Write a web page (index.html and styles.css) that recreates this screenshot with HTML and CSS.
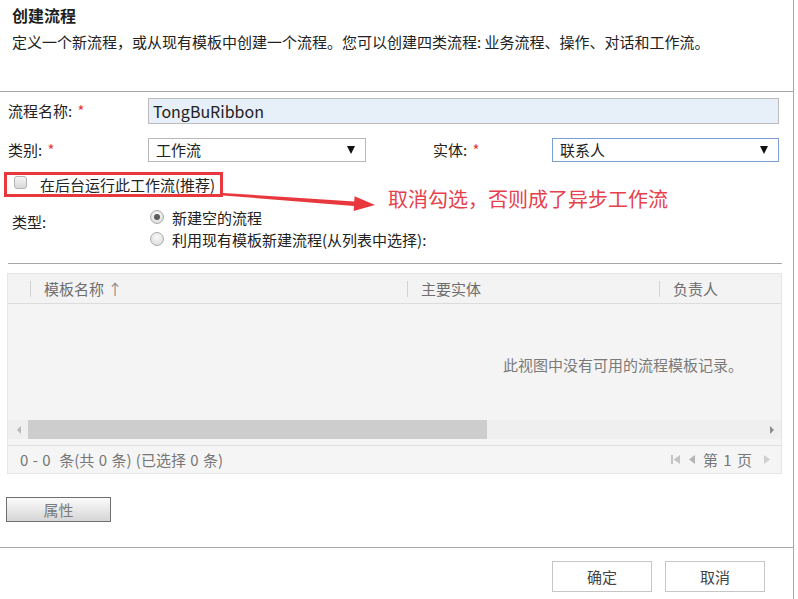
FILE: index.html
```html
<!DOCTYPE html>
<html lang="zh-CN">
<head>
    <meta charset="UTF-8">
    <meta name="viewport" content="width=device-width, initial-scale=1.0">
    <title>创建流程</title>
    <link rel="stylesheet" href="styles.css">
</head>
<body>
    <div class="page">
        <header class="head">
            <h1 class="title">创建流程</h1>
            <p class="desc">定义一个新流程，或从现有模板中创建一个流程。您可以创建四类流程: 业务流程、操作、对话和工作流。</p>
        </header>

        <section class="form">
            <div class="row row-name">
                <label class="label">流程名称: <span class="req">*</span></label>
                <div class="input">TongBuRibbon</div>
            </div>

            <div class="row row-kind">
                <label class="label">类别: <span class="req">*</span></label>
                <div class="select select-kind">工作流<span class="caret"></span></div>
                <label class="label label-entity">实体: <span class="req">*</span></label>
                <div class="select select-entity">联系人<span class="caret"></span></div>
            </div>

            <div class="row row-flag">
                <div class="flag">
                    <span class="checkbox"></span>
                    <span>在后台运行此工作流(推荐)</span>
                </div>
                <svg class="arrow" width="161" height="30" viewBox="0 0 161 30">
                    <polygon points="4,8 135.2,16.4 135.6,11.2 156,20 134.6,26 135,21 4,10.4" fill="#e8383d"/>
                </svg>
                <span class="note">取消勾选，否则成了异步工作流</span>
            </div>

            <div class="row row-type">
                <label class="label label-type">类型:</label>
                <div class="radios">
                    <div class="radio-line"><span class="radio checked"></span>新建空的流程</div>
                    <div class="radio-line"><span class="radio"></span>利用现有模板新建流程(从列表中选择):</div>
                </div>
            </div>
        </section>

        <div class="divider"></div>

        <div class="grid">
            <div class="grid-head">
                <div class="cell cell-check"></div>
                <div class="cell cell-name">模板名称 <span class="sort">↑</span></div>
                <div class="cell cell-entity">主要实体</div>
                <div class="cell cell-owner">负责人</div>
            </div>
            <div class="grid-body">此视图中没有可用的流程模板记录。</div>
            <div class="hscroll">
                <span class="sc-arrow sc-left"></span>
                <div class="sc-track"><div class="sc-thumb"></div></div>
                <span class="sc-arrow sc-right"></span>
            </div>
            <div class="grid-foot">
                <span class="count">0 - 0&nbsp; 条(共 0 条) (已选择 0 条)</span>
                <div class="pager">
                    <svg width="11" height="11" viewBox="0 0 11 11"><rect x="1" y="1" width="2" height="9" fill="#c4c4c4"/><polygon points="10,1 10,10 3.5,5.5" fill="#c4c4c4"/></svg>
                    <svg width="8" height="11" viewBox="0 0 8 11"><polygon points="7,1 7,10 1,5.5" fill="#b4b4b4"/></svg>
                    <span class="page-no">第 1 页</span>
                    <svg width="8" height="11" viewBox="0 0 8 11"><polygon points="1,1 1,10 7,5.5" fill="#cfcfcf"/></svg>
                </div>
            </div>
        </div>

        <div class="props">
            <button class="btn-props">属性</button>
        </div>

        <footer class="actions">
            <button class="btn">确定</button>
            <button class="btn">取消</button>
        </footer>
    </div>
</body>
</html>
```

FILE: styles.css
```css
body {
    margin: 0;
    background: white;
    font-family: "Noto Sans CJK SC", "Noto Sans", sans-serif;
    font-size: 15px;
    color: #222;
}
.page {
    width: 794px;
    height: 599px;
    border-right: 1px solid #a9a9a9;
    box-sizing: border-box;
    display: flex;
    flex-direction: column;
}
.head {
    height: 87px;
    border-bottom: 1px solid #a6a6a6;
    padding: 4px 12px 0;
    box-sizing: content-box;
    flex-shrink: 0;
}
.title {
    margin: 0;
    font-size: 16px;
    line-height: 22px;
    font-weight: 700;
    color: #1f1f1f;
}
.desc {
    margin: 6px 0 0;
    line-height: 20px;
    font-size: 15px;
}
.form {
    padding-left: 8px;
}
.row {
    display: flex;
    align-items: center;
}
.label {
    width: 140px;
    flex-shrink: 0;
    line-height: 20px;
}
.req {
    color: #e8383d;
    margin-left: 2px;
}
.row-name {
    margin-top: 6px;
}
.input {
    width: 631px;
    height: 26px;
    box-sizing: border-box;
    background: #e7eff9;
    border: 1px solid #bcbcbc;
    padding: 0 4px;
    font-size: 16px;
    line-height: 24px;
    color: #222;
}
.row-kind {
    margin-top: 14px;
}
.select {
    height: 24px;
    box-sizing: border-box;
    border: 1px solid #b8b8b8;
    padding: 0 7px;
    line-height: 22px;
    display: flex;
    justify-content: space-between;
    align-items: center;
}
.select-kind {
    width: 218px;
}
.label-entity {
    width: 119px;
    padding-left: 67px;
}
.select-entity {
    width: 227px;
    border-color: #7b9fd6;
}
.caret {
    width: 0;
    height: 0;
    border-left: 4px solid transparent;
    border-right: 4px solid transparent;
    border-top: 8px solid #111;
    margin-right: 3px;
}
.row-flag {
    margin-top: 10px;
    position: relative;
}
.flag {
    margin-left: -4px;
    width: 219px;
    height: 25px;
    box-sizing: border-box;
    border: 3px solid #e8383d;
    display: flex;
    align-items: center;
    gap: 13px;
    padding-left: 7px;
    line-height: 20px;
}
.checkbox {
    width: 13px;
    height: 13px;
    box-sizing: border-box;
    border: 1px solid #b3b3b3;
    border-radius: 3px;
    background: linear-gradient(#f4f4f4, #d9d9d9);
    margin-top: -5px;
}
.arrow {
    position: absolute;
    left: 211px;
    top: 13px;
}
.note {
    position: absolute;
    left: 380px;
    top: 15px;
    font-size: 20px;
    line-height: 24px;
    color: #e6404b;
    white-space: nowrap;
}
.row-type {
    margin-top: 9px;
    align-items: flex-start;
}
.label-type {
    padding-left: 4px;
    width: 136px;
    padding-top: 6px;
}
.radios {
    display: flex;
    flex-direction: column;
}
.radio-line {
    display: flex;
    align-items: center;
    height: 22px;
    gap: 8px;
    margin-left: 2px;
}
.radio {
    width: 14px;
    height: 14px;
    box-sizing: border-box;
    border: 1px solid #ababab;
    border-radius: 50%;
    background: radial-gradient(circle at 50% 35%, #fafafa, #d6d6d6);
    display: flex;
    align-items: center;
    justify-content: center;
}
.radio.checked::after {
    content: "";
    width: 6px;
    height: 6px;
    border-radius: 50%;
    background: #5a5a5a;
}
.divider {
    margin: 13px 11px 0 8px;
    border-top: 1px solid #a9a9a9;
}
.grid {
    margin: 9px 11px 0 7px;
    border: 1px solid #e6e6e6;
    background: #f4f4f4;
    color: #6e6e6e;
}
.grid-head {
    display: flex;
    height: 29px;
    border-bottom: 1px solid #dcdcdc;
    align-items: center;
    background: #f3f3f3;
}
.cell {
    height: 16px;
    line-height: 16px;
    border-left: 1px solid #d2d2d2;
    padding-left: 13px;
    box-sizing: border-box;
    flex-shrink: 0;
}
.cell-check {
    width: 23px;
    border-left: none;
    border-right: 1px solid #d2d2d2;
    padding: 0;
}
.cell-name {
    width: 376px;
    border-left: none;
}
.cell-entity {
    width: 252px;
}
.cell-owner {
    flex: 1;
}
.sort {
    color: #8a8a8a;
}
.grid-body {
    height: 115px;
    display: flex;
    align-items: center;
    justify-content: flex-end;
    padding: 5px 38px 0 0;
    box-sizing: border-box;
    color: #7a7a7a;
    font-size: 15px;
}
.hscroll {
    display: flex;
    align-items: center;
    height: 19px;
    background: #efefef;
    margin-top: 1px;
}
.sc-arrow {
    width: 0;
    height: 0;
    border-top: 4px solid transparent;
    border-bottom: 4px solid transparent;
    flex-shrink: 0;
}
.sc-left {
    border-right: 4px solid #b8b8b8;
    margin: 0 7px 0 9px;
}
.sc-right {
    border-left: 4px solid #8d8d8d;
    margin: 0 7px 0 7px;
}
.sc-track {
    flex: 1;
    height: 19px;
}
.sc-thumb {
    width: 459px;
    height: 19px;
    background: #cdcdcd;
}
.grid-foot {
    margin-top: 6px;
    height: 27px;
    border-top: 1px solid #dedede;
    background: #f5f5f5;
    display: flex;
    justify-content: space-between;
    align-items: center;
    padding: 0 10px 0 12px;
    color: #777;
}
.count {
    word-spacing: 1px;
}
.pager {
    display: flex;
    align-items: center;
    gap: 7px;
}
.page-no {
    margin-right: 4px;
    word-spacing: 2px;
}
.props {
    padding: 23px 0 0 6px;
    height: 50px;
    box-sizing: content-box;
}
.btn-props {
    width: 105px;
    height: 25px;
    border: 1px solid #6f6f6f;
    background: linear-gradient(#fbfbfb, #d6d6d6);
    color: #7a7a7a;
    font-family: inherit;
    font-size: 15px;
    padding: 0;
}
.actions {
    border-top: 1px solid #a9a9a9;
    display: flex;
    justify-content: flex-end;
    gap: 13px;
    padding: 13px 28px 0 0;
    flex: 1;
}
.btn {
    width: 100px;
    height: 31px;
    border: 1px solid #c6c6c6;
    background: white;
    color: #444;
    font-family: inherit;
    font-size: 15px;
    padding: 0;
}
```
